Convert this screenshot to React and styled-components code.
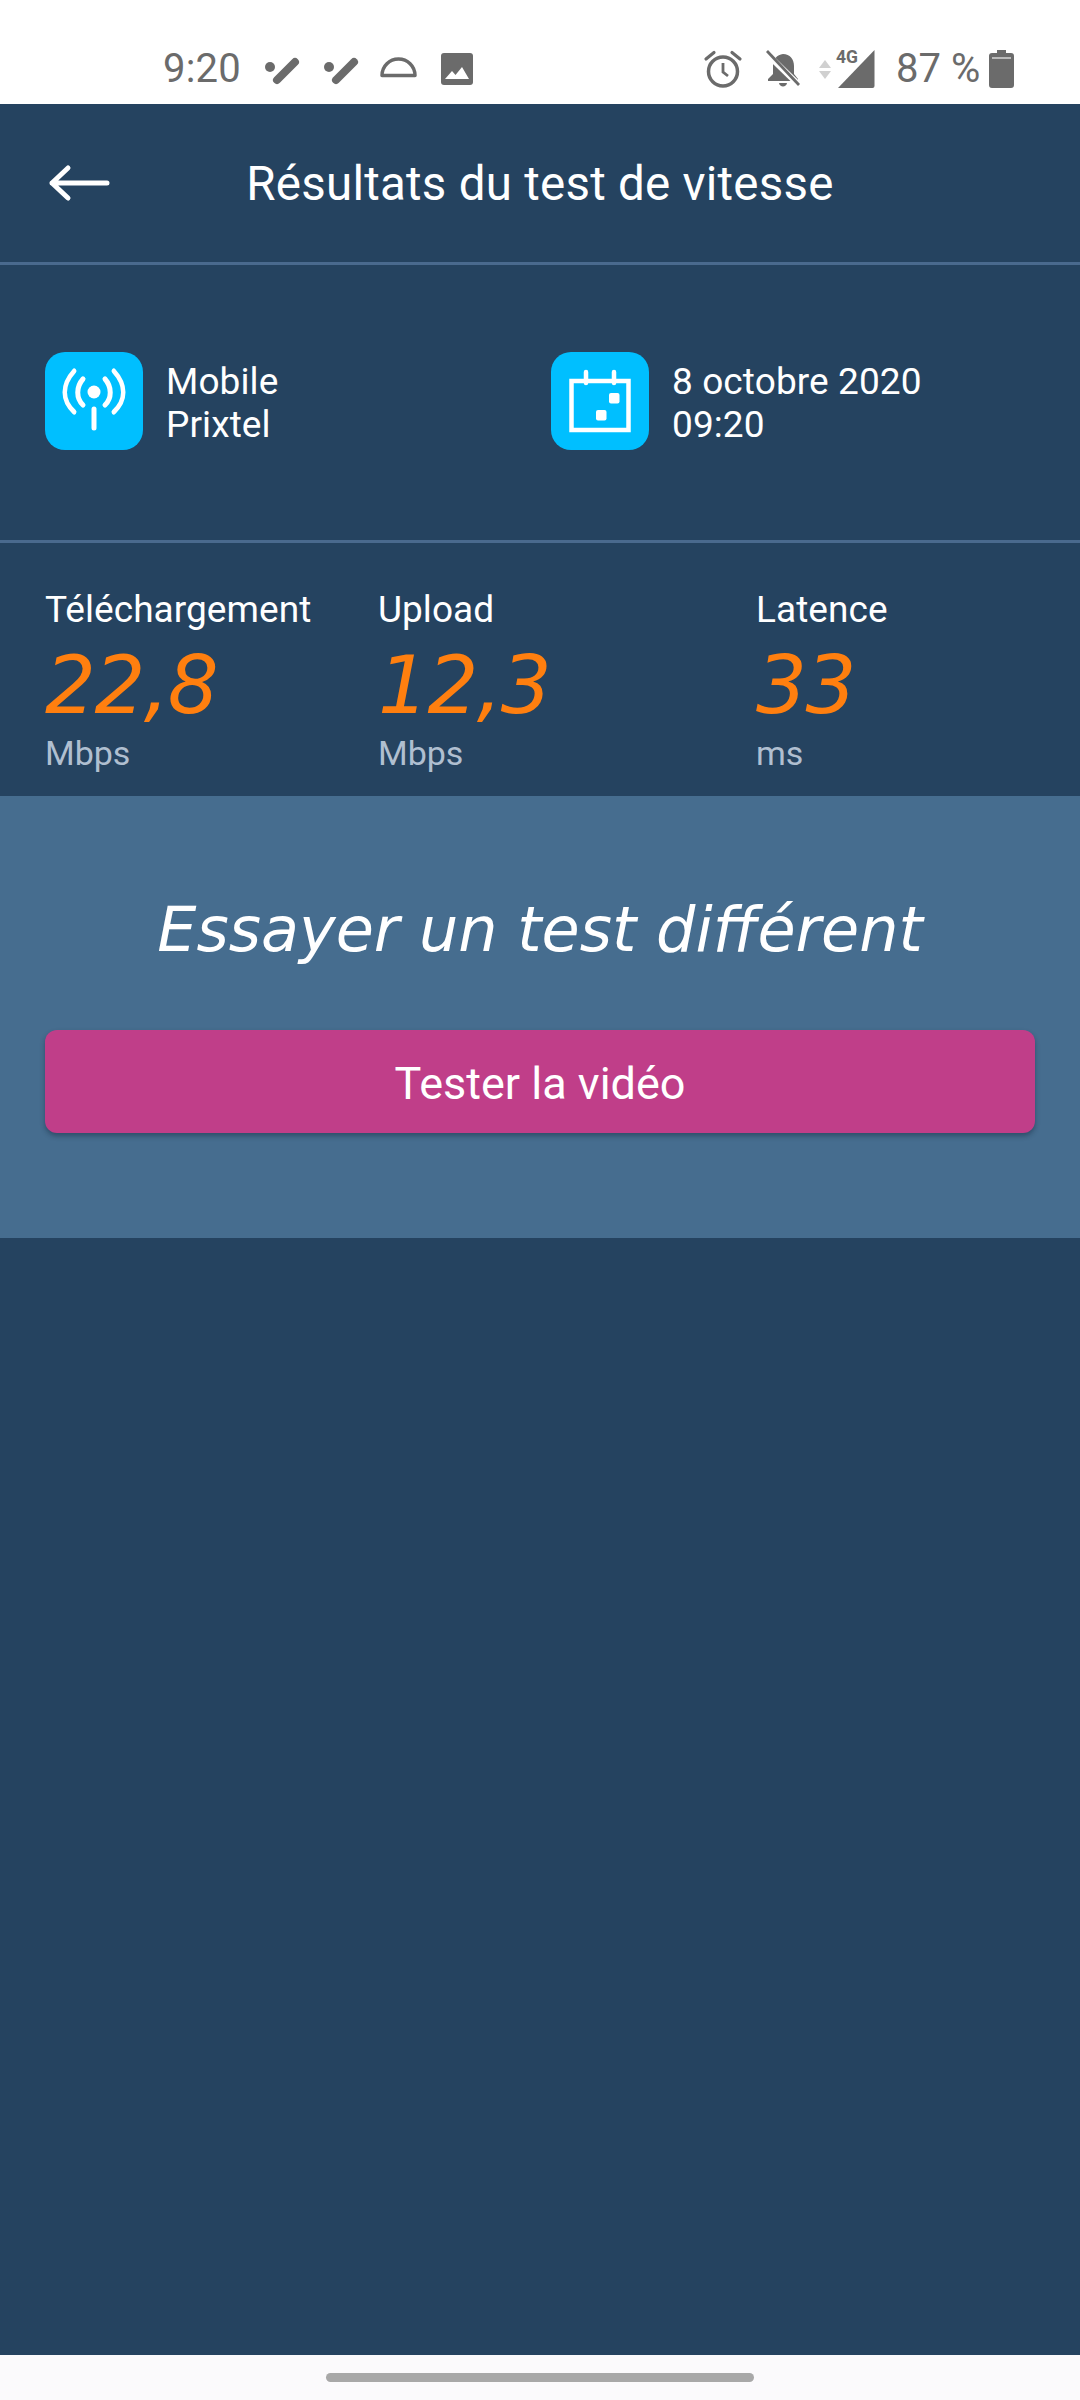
import React from "react";
import styled, { createGlobalStyle } from "styled-components";

const Global = createGlobalStyle`
  html, body { margin: 0; padding: 0; background: #254360; }
  #root { width: 1080px; height: 2400px; }
`;
const Page = styled.div`
  width: 1080px; height: 2400px; display: flex; flex-direction: column;
  background: #254360; color: #fff; font-family: Roboto, "Liberation Sans", sans-serif; overflow: hidden;
`;
const StatusBar = styled.div`
  height: 104px; flex: none; background: #fff; color: #6b6b6b; display: flex; align-items: flex-start;
  justify-content: space-between; padding: 0 66px 0 163px; box-sizing: border-box;
`;
const StatusGroup = styled.div`display: flex; align-items: flex-start; padding-top: 50px;`;
const Clock = styled.span`font-size: 40px; line-height: 37px; letter-spacing: 0.2px; width: 99px;`;
const Battery = styled.span`font-size: 40px; line-height: 37px; width: 93px; margin-left: 20px; white-space: nowrap;`;
const Header = styled.header`
  height: 161px; flex: none; box-sizing: border-box; display: grid; grid-template-columns: 1fr auto 1fr; align-items: center;
  border-bottom: 3px solid #4a6a8e; padding-left: 48px;
`;
const Back = styled.svg`width: 64px; height: 40px; display: block; margin-top: 2px;`;
const Title = styled.h1`font-size: 47.500px; font-weight: 400; margin: 2px 0 0 -48px; line-height: 54px; letter-spacing: .25px;`;
const Info = styled.section`
  height: 278px; flex: none; box-sizing: border-box; border-bottom: 3px solid #4a6a8e;
  display: grid; grid-template-columns: 506px 1fr; padding: 0 0 3px 45px; align-items: center;
`;
const InfoItem = styled.div`display: flex; align-items: center; gap: 23px;`;
const IconTile = styled.div`
  width: 98px; height: 98px; border-radius: 20px; background: #00bfff; display: flex; align-items: center; justify-content: center;
`;
const InfoText = styled.div`font-size: 37px; line-height: 43px; letter-spacing: .1px; margin-top: 4px;`;
const Stats = styled.section`
  height: 253px; flex: none; box-sizing: border-box; display: grid; grid-template-columns: 333px 378px 1fr;
  padding: 45px 0 0 45px;
`;
const Stat = styled.div`display: flex; flex-direction: column;`;
const StatLabel = styled.div`font-size: 37px; line-height: 44px; letter-spacing: .05px;`;
const StatValue = styled.div`
  font-family: "DejaVu Sans", sans-serif; font-style: italic; font-weight: 400; font-size: 80px; line-height: 82px;
  color: #ff7f0f; margin-top: 13px; letter-spacing: -1.500px; white-space: nowrap;
`;
const StatUnit = styled.div`font-size: 34px; line-height: 40px; color: #b0bfd0; margin-top: 6px;`;
const Panel = styled.section`
  height: 442px; flex: none; box-sizing: border-box; background: #466d8f; padding: 0 45px;
  display: flex; flex-direction: column; align-items: stretch;
`;
const PanelTitle = styled.h2`
  font-family: "DejaVu Sans", sans-serif; font-style: italic; font-weight: 400; font-size: 62px; line-height: 72px;
  margin: 98px 0 0; text-align: center; white-space: nowrap;
`;
const TestButton = styled.button`
  height: 103px; margin-top: 64px; border: 0; border-radius: 12px; background: #c03e89; color: #fff;
  font-family: Roboto, sans-serif; font-size: 45px; box-shadow: 0 3px 5px rgba(20,40,60,.45); padding: 3px 0 0;
`;
const Spacer = styled.div`flex: 1;`;
const NavBar = styled.div`
  height: 45px; flex: none; background: #fbfafc; display: flex; justify-content: center; padding-top: 18px; box-sizing: border-box;
`;
const Handle = styled.div`width: 428px; height: 9px; border-radius: 5px; background: #a8a8a8;`;
const SIcon = styled.svg`display: block; flex: none; overflow: visible; margin-left: ${(p) => p.$ml || 0}px; margin-top: ${(p) => p.$mt || 0}px;`;

const Ding = ({ ml }) => (
  <SIcon $ml={ml} $mt={8} width="36" height="28" viewBox="0 0 36 28">
    <circle cx="6" cy="9" r="5" fill="#6b6b6b" />
    <path d="M13 22 L31 4" stroke="#6b6b6b" strokeWidth="8" strokeLinecap="round" />
  </SIcon>
);

export default function App() {
  return (
    <Page>
      <Global />
      <StatusBar>
        <StatusGroup>
          <Clock>9:20</Clock>
          <Ding ml={2} />
          <Ding ml={23} />
          <SIcon $ml={21} $mt={6} width="37" height="22" viewBox="0 0 37 22">
            <path d="M2 19.500 H35 C35 10 27.500 3 18.500 3 C9.500 3 2 10 2 19.500 Z" fill="none" stroke="#6b6b6b" strokeWidth="3.500" strokeLinejoin="round" />
          </SIcon>
          <SIcon $ml={24} $mt={3} width="32" height="32" viewBox="0 0 32 32">
            <rect width="32" height="32" rx="3" fill="#6b6b6b" />
            <path d="M4 26 L11 18 L14.500 22 L21 14 L28 26 Z" fill="#fff" />
          </SIcon>
        </StatusGroup>
        <StatusGroup>
          <SIcon width="38" height="38" viewBox="0 0 38 38">
            <circle cx="19" cy="21.500" r="14.500" fill="none" stroke="#6b6b6b" strokeWidth="3.500" />
            <path d="M19 13 V22 L24 26" fill="none" stroke="#6b6b6b" strokeWidth="2.800" />
            <path d="M2 9 L10 2.500 M36 9 L28 2.500" stroke="#6b6b6b" strokeWidth="3.200" strokeLinecap="round" />
          </SIcon>
          <SIcon $ml={23} $mt={2} width="36" height="36" viewBox="0 0 36 36">
            <path d="M8 13 C8 7 12 3 18 2 C25 2 29 7 29 14 V22 L33 27 V29 H3 V27 L8 22 Z" fill="#6b6b6b" />
            <path d="M14 31 H22 C21.500 35.500 14.500 35.500 14 31 Z" fill="#6b6b6b" />
            <path d="M2 2 L34 33" stroke="#fff" strokeWidth="6" />
            <path d="M2 -1 L34 33" stroke="#6b6b6b" strokeWidth="2.800" />
          </SIcon>
          <SIcon $ml={17} $mt={10} width="14" height="19" viewBox="0 0 14 19">
            <path d="M7 0 L13 8 H1 Z M7 19 L13 11 H1 Z" fill="#d0d0d0" />
          </SIcon>
          <SIcon $ml={2} width="42" height="38" viewBox="-3 0 42 38">
            <path d="M37.500 0 V36 Q37.500 38 35.500 38 H1 Z" fill="#6b6b6b" />
            <text x="-1" y="13" fontFamily="Roboto, sans-serif" fontWeight="700" fontSize="17.500" fill="#6b6b6b">4G</text>
          </SIcon>
          <Battery>87 %</Battery>
          <SIcon width="25" height="38" viewBox="0 0 25 38">
            <path d="M8 0 H17 V3 H22 Q25 3 25 6 V35 Q25 38 22 38 H3 Q0 38 0 35 V6 Q0 3 3 3 H8 Z" fill="#6b6b6b" />
            <path d="M3 8 H22" stroke="#cfcfcf" strokeWidth="1.600" />
          </SIcon>
        </StatusGroup>
      </StatusBar>
      <Header>
        <Back viewBox="0 0 64 40" fill="none" stroke="#fff" strokeWidth="5" strokeLinecap="round" strokeLinejoin="round">
          <path d="M4 19 H59 M20 4 L4 19 L20 34" />
        </Back>
        <Title>Résultats du test de vitesse</Title>
      </Header>
      <Info>
        <InfoItem>
          <IconTile>
            <svg width="70" height="70" viewBox="0 0 70 70" fill="none" stroke="#fff" strokeLinecap="round" strokeWidth="5">
              <circle cx="35" cy="26" r="6.500" fill="#fff" stroke="none" />
              <path d="M35 43 V62" />
              <path d="M24 13 C17 21 17 32 24 39 M46 13 C53 21 53 32 46 39" />
              <path d="M13 5 C-1 19 -1 34 13 46 M57 5 C71 19 71 34 57 46" transform="translate(3.500 0) scale(.9 1)" />
            </svg>
          </IconTile>
          <InfoText>Mobile<br />Prixtel</InfoText>
        </InfoItem>
        <InfoItem>
          <IconTile>
            <svg width="62" height="64" viewBox="0 0 62 64" fill="none" stroke="#fff" strokeWidth="4.500">
              <rect x="2.500" y="12" width="57" height="49" />
              <path d="M17 3 V14 M45 3 V14" strokeLinecap="round" />
              <rect x="40" y="24" width="10.500" height="10.500" rx="2" fill="#fff" stroke="none" />
              <rect x="27" y="41" width="10.500" height="10.500" rx="2" fill="#fff" stroke="none" />
            </svg>
          </IconTile>
          <InfoText>8 octobre 2020<br />09:20</InfoText>
        </InfoItem>
      </Info>
      <Stats>
        <Stat><StatLabel>Téléchargement</StatLabel><StatValue>22,8</StatValue><StatUnit>Mbps</StatUnit></Stat>
        <Stat><StatLabel>Upload</StatLabel><StatValue>12,3</StatValue><StatUnit>Mbps</StatUnit></Stat>
        <Stat><StatLabel>Latence</StatLabel><StatValue>33</StatValue><StatUnit>ms</StatUnit></Stat>
      </Stats>
      <Panel>
        <PanelTitle>Essayer un test différent</PanelTitle>
        <TestButton>Tester la vidéo</TestButton>
      </Panel>
      <Spacer />
      <NavBar><Handle /></NavBar>
    </Page>
  );
}
